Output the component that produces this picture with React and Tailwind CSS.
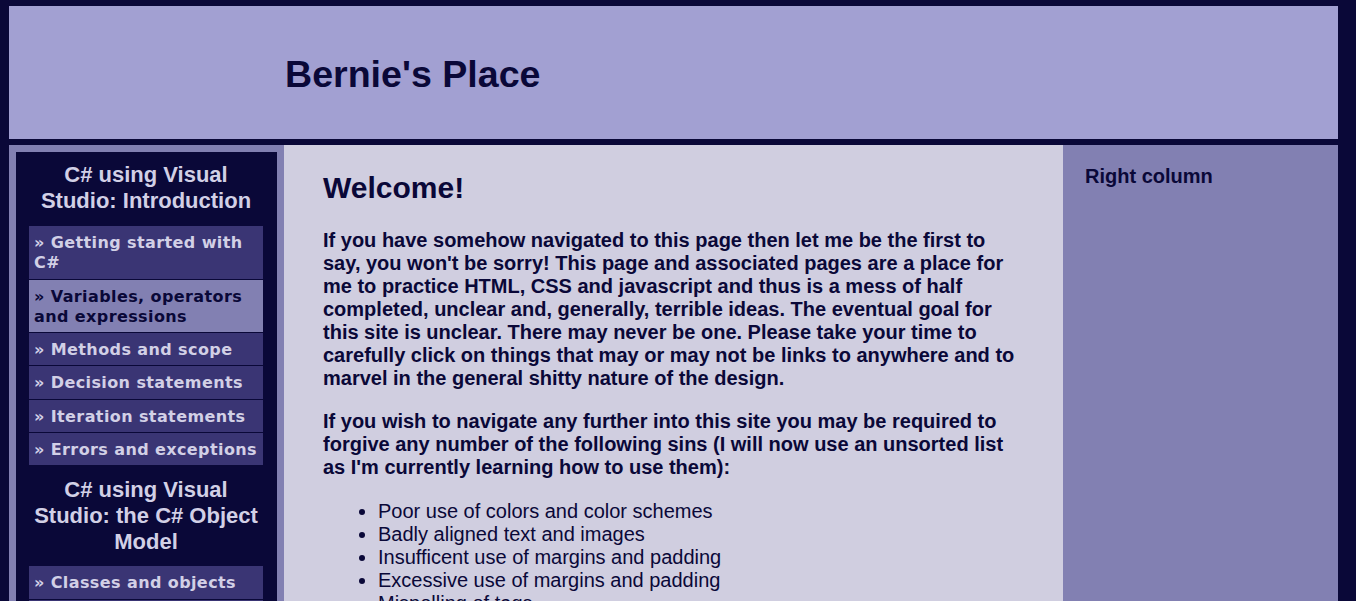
const introLinks = [
  { label: "Getting started with C#" },
  { label: "Variables, operators and expressions", active: true },
  { label: "Methods and scope" },
  { label: "Decision statements" },
  { label: "Iteration statements" },
  { label: "Errors and exceptions" },
];

const objectLinks = [
  { label: "Classes and objects" },
  { label: "Values and references" },
  { label: "Enumerations and structures" },
  { label: "Arrays" },
];

const sins = [
  "Poor use of colors and color schemes",
  "Badly aligned text and images",
  "Insufficent use of margins and padding",
  "Excessive use of margins and padding",
  "Mispelling of tags",
  "Broken links",
];

const arial = { fontFamily: '"Liberation Sans", Arial, sans-serif' };
const verdana = { fontFamily: '"DejaVu Sans", Verdana, sans-serif' };

const NavHeading = ({ children }) => (
  <h2
    className="text-center text-[22px] leading-[26px] font-bold text-[#d2d0e6]"
    style={arial}
  >
    {children}
  </h2>
);

const NavList = ({ links }) => (
  <ul className="flex flex-col">
    {links.map((l) => (
      <li
        key={l.label}
        className={`${
          l.active ? "bg-[#8280b2] text-[#0a0838]" : "bg-[#3a3574] text-[#d2d0e6]"
        } border-b border-[#0a0838] px-[5px] pt-[7px] pb-[5px] text-[16px] leading-[20.3px] font-bold tracking-[0.4px]`}
        style={verdana}
      >
        » {l.label}
      </li>
    ))}
  </ul>
);

export default function App() {
  return (
    <div
      className="min-h-screen bg-[#0a0838] pt-[6px] pl-[9px] pr-[18px] text-[#0a0838]"
      style={arial}
    >
      {/* header */}
      <header className="h-[133px] bg-[#a2a0d2] pl-[276px] pt-[47px]">
        <h1 className="text-[37.6px] leading-[43px] font-bold">Bernie's Place</h1>
      </header>

      <div className="mt-[6px] flex">
        {/* left column */}
        <aside className="w-[275px] shrink-0 bg-[#8280b2] p-[7px]">
          <nav className="bg-[#0a0838] pt-[10px] pb-[12px] pl-[13px] pr-[14px]">
            <NavHeading>
              C# using Visual
              <br />
              Studio: Introduction
            </NavHeading>
            <div className="mt-[12px]">
              <NavList links={introLinks} />
            </div>
            <div className="mt-[11px]">
              <NavHeading>
                C# using Visual
                <br />
                Studio: the C# Object
                <br />
                Model
              </NavHeading>
            </div>
            <div className="mt-[11px]">
              <NavList links={objectLinks} />
            </div>
          </nav>
        </aside>

        {/* main content */}
        <main className="flex-1 bg-[#d0cee0] px-[39px] pt-[26px] pb-10">
          <h1 className="text-[30px] leading-[34px] font-bold">Welcome!</h1>
          <p className="mt-[24px] text-[20px] leading-[23px] font-bold">
            If you have somehow navigated to this page then let me be the first to
            say, you won't be sorry! This page and associated pages are a place for
            me to practice HTML, CSS and javascript and thus is a mess of half
            completed, unclear and, generally, terrible ideas. The eventual goal for
            this site is unclear. There may never be one. Please take your time to
            carefully click on things that may or may not be links to anywhere and to
            marvel in the general shitty nature of the design.
          </p>
          <p className="mt-[20px] text-[20px] leading-[23px] font-bold">
            If you wish to navigate any further into this site you may be required to
            forgive any number of the following sins (I will now use an unsorted list
            as I'm currently learning how to use them):
          </p>
          <ul className="mt-[21px] list-disc pl-[55px] text-[20px] leading-[23px]">
            {sins.map((s) => (
              <li key={s}>{s}</li>
            ))}
          </ul>
        </main>

        {/* right column */}
        <aside className="w-[275px] shrink-0 bg-[#8280b2] pl-[22px] pt-[20px]">
          <h3 className="text-[20px] leading-[23px] font-bold">Right column</h3>
        </aside>
      </div>
    </div>
  );
}
